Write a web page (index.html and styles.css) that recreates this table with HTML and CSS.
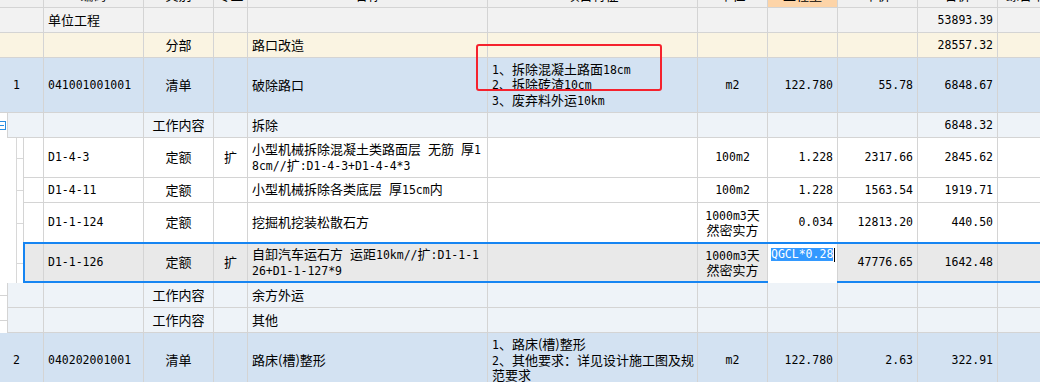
FILE: index.html
```html
<!DOCTYPE html>
<html lang="zh">
<head>
<meta charset="utf-8">
<link rel="stylesheet" href="styles.css">
</head>
<body>
<div class="sheet">
  <div class="row hd">
    <div class="c w0"></div>
    <div class="c w1 ctr"><span class="lbl">编码</span></div>
    <div class="c w2 ctr"><span class="lbl">类别</span></div>
    <div class="c w3 ctr"><span class="lbl">专业</span></div>
    <div class="c w4 ctr"><span class="lbl">名称</span></div>
    <div class="c w5 ctr"><span class="lbl">项目特征</span></div>
    <div class="c w6 ctr"><span class="lbl">单位</span></div>
    <div class="c w7 ctr hot"><span class="lbl">工程量</span></div>
    <div class="c w8 ctr"><span class="lbl">单价</span></div>
    <div class="c w9 ctr"><span class="lbl">合价</span></div>
    <div class="c w10"><span class="lbl">综合单价</span></div>
  </div>

  <div class="row h25 unit">
    <div class="c w0"></div>
    <div class="c w1">单位工程</div>
    <div class="c w2"></div>
    <div class="c w3"></div>
    <div class="c w4"></div>
    <div class="c w5"></div>
    <div class="c w6"></div>
    <div class="c w7"></div>
    <div class="c w8"></div>
    <div class="c w9 rt m">53893.39</div>
    <div class="c w10"></div>
  </div>

  <div class="row h25 part">
    <div class="c w0"></div>
    <div class="c w1"></div>
    <div class="c w2 ctr">分部</div>
    <div class="c w3"></div>
    <div class="c w4">路口改造</div>
    <div class="c w5"></div>
    <div class="c w6"></div>
    <div class="c w7"></div>
    <div class="c w8"></div>
    <div class="c w9 rt m">28557.32</div>
    <div class="c w10"></div>
  </div>

  <div class="row h55 bill">
    <div class="c w0 idx m">1</div>
    <div class="c w1 m">041001001001</div>
    <div class="c w2 ctr">清单</div>
    <div class="c w3"></div>
    <div class="c w4">破除路口</div>
    <div class="c w5"><div><span class="m">1</span>、拆除混凝土路面<span class="m">18cm</span><br><span class="m">2</span>、拆除砖渣<span class="m">10cm</span><br><span class="m">3</span>、废弃料外运<span class="m">10km</span></div></div>
    <div class="c w6 ctr m">m2</div>
    <div class="c w7 rt m">122.780</div>
    <div class="c w8 rt m">55.78</div>
    <div class="c w9 rt m">6848.67</div>
    <div class="c w10"></div>
  </div>

  <div class="row h25 work">
    <div class="gut g1"><span class="toggle"></span></div>
    <div class="c w0a"></div>
    <div class="c w1"></div>
    <div class="c w2 ctr">工作内容</div>
    <div class="c w3"></div>
    <div class="c w4">拆除</div>
    <div class="c w5"></div>
    <div class="c w6"></div>
    <div class="c w7"></div>
    <div class="c w8"></div>
    <div class="c w9 rt m">6848.32</div>
    <div class="c w10"></div>
  </div>

  <div class="row h40 quota">
    <div class="gut g2"></div>
    <div class="c w0b"></div>
    <div class="c w1 m">D1-4-3</div>
    <div class="c w2 ctr">定额</div>
    <div class="c w3 ctr">扩</div>
    <div class="c w4"><div>小型机械拆除混凝土类路面层<span class="m"> </span>无筋<span class="m"> </span>厚<span class="m">1</span><br><span class="m">8cm//</span>扩<span class="m">:D1-4-3+D1-4-4*3</span></div></div>
    <div class="c w5"></div>
    <div class="c w6 ctr m">100m2</div>
    <div class="c w7 rt m">1.228</div>
    <div class="c w8 rt m">2317.66</div>
    <div class="c w9 rt m">2845.62</div>
    <div class="c w10"></div>
  </div>

  <div class="row h25 quota">
    <div class="gut g2"></div>
    <div class="c w0b"></div>
    <div class="c w1 m">D1-4-11</div>
    <div class="c w2 ctr">定额</div>
    <div class="c w3"></div>
    <div class="c w4"><div>小型机械拆除各类底层<span class="m"> </span>厚<span class="m">15cm</span>内</div></div>
    <div class="c w5"></div>
    <div class="c w6 ctr m">100m2</div>
    <div class="c w7 rt m">1.228</div>
    <div class="c w8 rt m">1563.54</div>
    <div class="c w9 rt m">1919.71</div>
    <div class="c w10"></div>
  </div>

  <div class="row h40 quota">
    <div class="gut g2"></div>
    <div class="c w0b"></div>
    <div class="c w1 m">D1-1-124</div>
    <div class="c w2 ctr">定额</div>
    <div class="c w3"></div>
    <div class="c w4">挖掘机挖装松散石方</div>
    <div class="c w5"></div>
    <div class="c w6 ctr"><div><span class="m">1000m3</span>天<br>然密实方</div></div>
    <div class="c w7 rt m">0.034</div>
    <div class="c w8 rt m">12813.20</div>
    <div class="c w9 rt m">440.50</div>
    <div class="c w10"></div>
  </div>

  <div class="row h40 quota cur">
    <div class="gut g2"></div>
    <div class="c w0b"></div>
    <div class="c w1 m">D1-1-126</div>
    <div class="c w2 ctr">定额</div>
    <div class="c w3 ctr">扩</div>
    <div class="c w4"><div>自卸汽车运石方<span class="m"> </span>运距<span class="m">10km//</span>扩<span class="m">:D1-1-1</span><br><span class="m">26+D1-1-127*9</span></div></div>
    <div class="c w5"></div>
    <div class="c w6 ctr"><div><span class="m">1000m3</span>天<br>然密实方</div></div>
    <div class="c w7"></div>
    <div class="c w8 rt m">47776.65</div>
    <div class="c w9 rt m">1642.48</div>
    <div class="c w10"></div>
  </div>

  <div class="row h25 work">
    <div class="gut g3"></div>
    <div class="c w0a"></div>
    <div class="c w1"></div>
    <div class="c w2 ctr">工作内容</div>
    <div class="c w3"></div>
    <div class="c w4">余方外运</div>
    <div class="c w5"></div>
    <div class="c w6"></div>
    <div class="c w7"></div>
    <div class="c w8"></div>
    <div class="c w9"></div>
    <div class="c w10"></div>
  </div>

  <div class="row h25 work">
    <div class="gut g3"></div>
    <div class="c w0a"></div>
    <div class="c w1"></div>
    <div class="c w2 ctr">工作内容</div>
    <div class="c w3"></div>
    <div class="c w4">其他</div>
    <div class="c w5"></div>
    <div class="c w6"></div>
    <div class="c w7"></div>
    <div class="c w8"></div>
    <div class="c w9"></div>
    <div class="c w10"></div>
  </div>

  <div class="row h55 bill">
    <div class="c w0 idx m">2</div>
    <div class="c w1 m">040202001001</div>
    <div class="c w2 ctr">清单</div>
    <div class="c w3"></div>
    <div class="c w4">路床(槽)整形</div>
    <div class="c w5"><div><span class="m">1</span>、路床(槽)整形<br><span class="m">2</span>、其他要求：详见设计施工图及规<br>范要求</div></div>
    <div class="c w6 ctr m">m2</div>
    <div class="c w7 rt m">122.780</div>
    <div class="c w8 rt m">2.63</div>
    <div class="c w9 rt m">322.91</div>
    <div class="c w10"></div>
  </div>

  <div class="selbox"></div>
  <div class="editor"><span class="seltext m">QGCL*0.28</span><span class="caret"></span></div>
  <div class="redbox"></div>
</div>
</body>
</html>
```

FILE: styles.css
```css
* { box-sizing: border-box; margin: 0; padding: 0; }

body {
  margin: 0;
  width: 1040px;
  height: 382px;
  overflow: hidden;
  background: #fff;
  color: #000;
  font-family: "Noto Sans CJK SC", sans-serif;
  font-size: 13px;
}

.sheet { position: relative; width: 1040px; }

.row { display: flex; }

.c {
  flex: none;
  display: flex;
  align-items: center;
  padding: 0 4px;
  border-right: 1px solid #d4d4d4;
  border-bottom: 1px solid #d4d4d4;
  white-space: nowrap;
  line-height: 14.5px;
  overflow: hidden;
}

.m { font-family: "DejaVu Sans Mono", "Liberation Mono", monospace; font-size: 11.5px; }

.w0 { width: 44px; }
.w0a { width: 37px; border-left: 1px solid #d4d4d4; }
.w0b { width: 21px; border-left: 1px solid #d4d4d4; }
.w1 { width: 100px; }
.w2 { width: 70px; }
.w3 { width: 34px; }
.w4 { width: 240px; }
.w5 { width: 210px; }
.w6 { width: 70px; }
.w7 { width: 70px; }
.w8 { width: 80px; }
.w9 { width: 80px; }
.w10 { flex: 1; border-right: 0; }

.ctr { justify-content: center; text-align: center; }
.rt { justify-content: flex-end; text-align: right; }
.idx { padding-left: 13px; }

.h25 { height: 25px; }
.h40 { height: 40px; }
.h55 { height: 55px; }

/* header strip (scrolled, only the bottom of labels visible) */
.hd { height: 8px; background: #f0f0f0; }
.hd .c { align-items: flex-start; height: 8px; }
.hd .w10 { padding-left: 8px; }
.hd .hot { background: #fdd4a8; }
.lbl { display: block; line-height: 13px; margin-top: -12px; }

/* row kinds */
.unit .c { background: #f2f2f2; }
.part .c { background: #faf4e2; }
.bill .c { background: #d3e2f2; }
.work .c { background: #eef3f8; }
.quota .c { background: #fff; }
.cur .c { background: #e9e9e9; }

/* tree gutter */
.gut { flex: none; overflow: hidden; display: flex; align-items: center; background: #fff; }
.g1 { width: 7px; }
.g3 {
  width: 7px;
  background: linear-gradient(#d4d4d4, #d4d4d4) 0 50% / 7px 1px no-repeat, #fff;
}
.g2 {
  width: 23px;
  background:
    linear-gradient(#d8d8d8, #d8d8d8) 16px 0 / 1px 100% no-repeat,
    linear-gradient(#d8d8d8, #d8d8d8) 16px 50% / 7px 1px no-repeat,
    #fff;
}
.toggle {
  flex: none;
  width: 9px;
  height: 9px;
  margin-left: -3px;
  margin-top: -1px;
  border: 1px solid #2a8ee0;
  background: #fff;
  display: flex;
  align-items: center;
  justify-content: center;
}
.toggle::before { content: ""; width: 5px; height: 1px; background: #2a8ee0; }

/* overlays */
.selbox {
  position: absolute;
  left: 23px;
  top: 242px;
  width: 1030px;
  height: 41px;
  border: 2px solid #1685f2;
  pointer-events: none;
}

.editor {
  position: absolute;
  left: 768px;
  top: 244px;
  width: 69px;
  height: 39px;
  background: #fff;
  padding: 4px 0 0 3px;
  display: flex;
  align-items: flex-start;
  white-space: nowrap;
}
.seltext {
  background: #3399ff;
  color: #fff;
  line-height: 13px;
  height: 13px;
}
.caret { width: 1px; height: 14px; background: #000; margin-left: 1px; }

.redbox {
  position: absolute;
  left: 476px;
  top: 44px;
  width: 186px;
  height: 47px;
  border: 2px solid #f5222d;
  border-radius: 3px;
  pointer-events: none;
}
```
